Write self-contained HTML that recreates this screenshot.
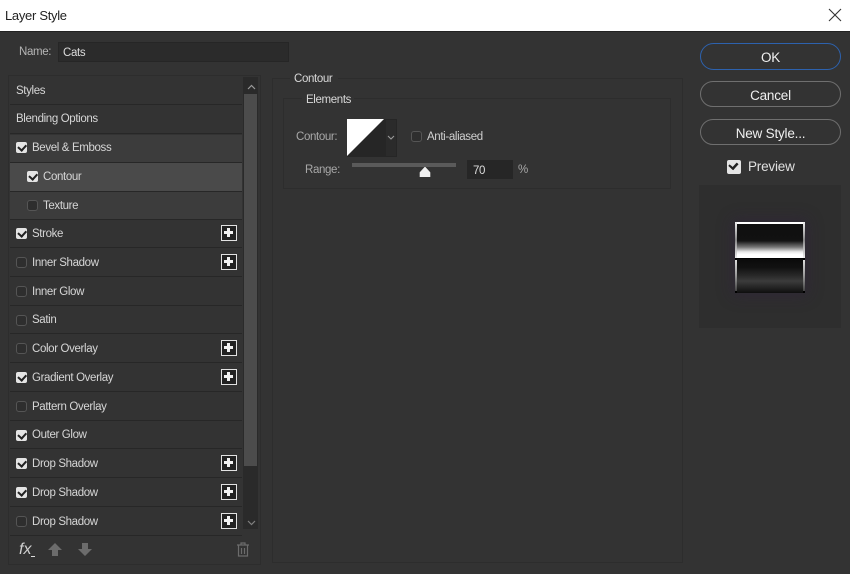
<!DOCTYPE html>
<html><head><meta charset="utf-8"><style>
html,body{margin:0;padding:0}
body{width:850px;height:574px;overflow:hidden;position:relative;background:#333;font-family:"Liberation Sans",sans-serif;font-size:11.5px;color:#d6d6d6}
div,span,svg{position:absolute;box-sizing:border-box}
.t{white-space:nowrap;line-height:16px;letter-spacing:-.36px}
.r{left:10px;width:232px;height:28px;background:#333;border-bottom:1px solid #272727}
.c{width:11px;height:11px;border-radius:3px;background:#2e2e2e;border:1px solid #555}
.k{width:11px;height:11px;border-radius:2px;background:#e4e4e4}
.k::after{content:"";position:absolute;left:2px;top:1.5px;width:6px;height:3.5px;border-left:2px solid #222;border-bottom:2px solid #222;transform:rotate(-48deg)}
.p{left:221px;width:16px;height:16px;border:1.5px solid #e2e2e2;background:#222}
.p::before{content:"";position:absolute;left:2px;top:5px;width:9px;height:3px;background:#f2f2f2}
.p::after{content:"";position:absolute;left:5px;top:2px;width:3px;height:9px;background:#f2f2f2}
.b{left:700px;width:141px;border:1px solid #6f6f6f;border-radius:14px;text-align:center;color:#f0f0f0;font-size:13.5px;letter-spacing:-.2px}
</style></head><body>

<div style="left:0;top:0;width:850px;height:31px;background:#fff"></div>
<div style="left:0;top:31px;width:850px;height:1px;background:#222"></div>
<div class="t" style="left:5px;top:8px;color:#222;font-size:13px;letter-spacing:-.3px">Layer Style</div>
<svg style="left:828px;top:8px" width="14" height="14" viewBox="0 0 14 14"><path d="M1 1L13 13M13 1L1 13" stroke="#333" stroke-width="1.1" fill="none"/></svg>

<div class="t" style="left:19px;top:44px;color:#b5b5b5">Name:</div>
<div style="left:58px;top:42px;width:231px;height:20px;background:#2b2b2b;border:1px solid #262626"></div>
<div class="t" style="left:63px;top:45px;color:#dcdcdc">Cats</div>

<div style="left:8px;top:75px;width:253px;height:490px;border:1px solid #2d2d2d"></div>
<div style="left:243px;top:77px;width:15px;height:452px;background:#2a2a2a"></div>
<div style="left:244px;top:94px;width:13px;height:372px;background:#4c4c4c"></div>
<svg style="left:247px;top:84px" width="9" height="6" viewBox="0 0 9 6"><path d="M1 5L4.5 1.5L8 5" stroke="#9a9a9a" stroke-width="1.2" fill="none"/></svg>
<svg style="left:247px;top:520px" width="9" height="6" viewBox="0 0 9 6"><path d="M1 1L4.5 4.5L8 1" stroke="#808080" stroke-width="1.2" fill="none"/></svg>

<div class="r" style="top:77px"></div>
<div class="r" style="top:106px"></div>
<div class="r" style="top:135px;background:#3c3c3c"></div>
<div class="r" style="top:163px;height:29px;background:#4a4a4a"></div>
<div class="r" style="top:192px;background:#3c3c3c"></div>
<div class="r" style="top:220px"></div>
<div class="r" style="top:249px"></div>
<div class="r" style="top:278px"></div>
<div class="r" style="top:306px"></div>
<div class="r" style="top:335px"></div>
<div class="r" style="top:364px"></div>
<div class="r" style="top:393px"></div>
<div class="r" style="top:421px"></div>
<div class="r" style="top:450px"></div>
<div class="r" style="top:479px"></div>
<div class="r" style="top:508px"></div>

<div class="t" style="left:16px;top:83px">Styles</div>
<div class="t" style="left:16px;top:111px">Blending Options</div>
<div class="k" style="left:16px;top:142px"></div><div class="t" style="left:32px;top:140px">Bevel &amp; Emboss</div>
<div class="k" style="left:27px;top:171px"></div><div class="t" style="left:43px;top:169px">Contour</div>
<div class="c" style="left:27px;top:200px"></div><div class="t" style="left:43px;top:198px">Texture</div>
<div class="k" style="left:16px;top:228px"></div><div class="t" style="left:32px;top:226px">Stroke</div><div class="p" style="top:225px"></div>
<div class="c" style="left:16px;top:257px"></div><div class="t" style="left:32px;top:255px">Inner Shadow</div><div class="p" style="top:254px"></div>
<div class="c" style="left:16px;top:286px"></div><div class="t" style="left:32px;top:284px">Inner Glow</div>
<div class="c" style="left:16px;top:315px"></div><div class="t" style="left:32px;top:312px">Satin</div>
<div class="c" style="left:16px;top:343px"></div><div class="t" style="left:32px;top:341px">Color Overlay</div><div class="p" style="top:340px"></div>
<div class="k" style="left:16px;top:372px"></div><div class="t" style="left:32px;top:370px">Gradient Overlay</div><div class="p" style="top:369px"></div>
<div class="c" style="left:16px;top:401px"></div><div class="t" style="left:32px;top:399px">Pattern Overlay</div>
<div class="k" style="left:16px;top:430px"></div><div class="t" style="left:32px;top:427px">Outer Glow</div>
<div class="k" style="left:16px;top:458px"></div><div class="t" style="left:32px;top:456px">Drop Shadow</div><div class="p" style="top:455px"></div>
<div class="k" style="left:16px;top:487px"></div><div class="t" style="left:32px;top:485px">Drop Shadow</div><div class="p" style="top:484px"></div>
<div class="c" style="left:16px;top:516px"></div><div class="t" style="left:32px;top:514px">Drop Shadow</div><div class="p" style="top:513px"></div>

<div class="t" style="left:19px;top:542px;font-style:italic;font-size:16px;letter-spacing:0;color:#d0d0d0">fx</div>
<div style="left:31px;top:556px;width:4px;height:1px;background:#ddd"></div>
<svg style="left:48px;top:543px" width="14" height="13" viewBox="0 0 14 13"><path d="M7 0L14 7H10V13H4V7H0Z" fill="#6c6c6c"/></svg>
<svg style="left:78px;top:543px" width="14" height="13" viewBox="0 0 14 13"><path d="M4 0H10V6H14L7 13L0 6H4Z" fill="#6c6c6c"/></svg>
<svg style="left:236px;top:542px" width="14" height="15" viewBox="0 0 14 15"><path d="M1 3H13M5 3V1H9V3M2.5 3.5V14H11.5V3.5M5.5 6V12M8.5 6V12" stroke="#6c6c6c" stroke-width="1.2" fill="none"/></svg>

<div style="left:272px;top:78px;width:411px;height:485px;border:1px solid #2d2d2d"></div>
<div style="left:290px;top:74px;width:48px;height:10px;background:#333"></div>
<div class="t" style="left:294px;top:71px;color:#d8d8d8">Contour</div>
<div style="left:283px;top:98px;width:388px;height:91px;border:1px solid #2d2d2d"></div>
<div style="left:302px;top:94px;width:52px;height:10px;background:#333"></div>
<div class="t" style="left:306px;top:92px;color:#d8d8d8">Elements</div>

<div class="t" style="left:296px;top:129px;color:#a8a8a8">Contour:</div>
<svg style="left:347px;top:119px" width="38" height="38" viewBox="0 0 38 38"><rect width="38" height="38" fill="#262626"/><path d="M0 0H37L0 37Z" fill="#fff"/></svg>
<div style="left:385px;top:119px;width:12px;height:38px;background:#2b2b2b;border:1px solid #262626"></div>
<svg style="left:387px;top:135px" width="8" height="5" viewBox="0 0 8 5"><path d="M1 1L4 4L7 1" stroke="#9a9a9a" stroke-width="1.1" fill="none"/></svg>
<div class="c" style="left:411px;top:131px"></div>
<div class="t" style="left:427px;top:129px;color:#cfcfcf">Anti-aliased</div>

<div class="t" style="left:305px;top:162px;color:#a8a8a8">Range:</div>
<div style="left:352px;top:163px;width:104px;height:4px;background:#5a5a5a"></div>
<svg style="left:419px;top:167px" width="12" height="10" viewBox="0 0 12 10"><path d="M6 0L11 5.5V10H1V5.5Z" fill="#f0f0f0" stroke="#f0f0f0" stroke-linejoin="round" stroke-width=".6"/></svg>
<div style="left:467px;top:160px;width:46px;height:19px;background:#262626"></div>
<div class="t" style="left:473px;top:163px;color:#dcdcdc">70</div>
<div class="t" style="left:518px;top:162px;color:#a8a8a8">%</div>

<div class="b" style="top:43px;height:27px;line-height:27px;border:1.5px solid #2d62ae">OK</div>
<div class="b" style="top:81px;height:26px;line-height:27px">Cancel</div>
<div class="b" style="top:119px;height:26px;line-height:27px">New Style...</div>
<div class="k" style="left:727px;top:160px;width:14px;height:14px"><span style="left:3px;top:2.5px;width:8px;height:5px;border-left:2px solid #222;border-bottom:2px solid #222;transform:rotate(-48deg)"></span></div>
<div class="t" style="left:748px;top:159px;font-size:13.5px;color:#e0e0e0;letter-spacing:-.2px">Preview</div>

<div style="left:699px;top:185px;width:142px;height:143px;background:#2e2e2e"></div>
<div style="left:735px;top:222px;width:70px;height:71px;background:#000;box-shadow:0 0 14px 3px rgba(50,30,70,.35)"></div>
<div style="left:737px;top:224px;width:66px;height:34px;background:linear-gradient(#0f0f0f 0,#111 45%,#161616 50%,#777 68%,#e8e8e8 82%,#fff 90%,#fff 100%)"></div>
<div style="left:737px;top:259px;width:66px;height:34px;background:linear-gradient(#0a0a0a 0,#111 25%,#2a2a2a 50%,#3c3c3c 65%,#222 85%,#0e0e0e 100%)"></div>
<div style="left:735px;top:222px;width:70px;height:2px;background:#fff"></div>
<div style="left:735px;top:222px;width:2px;height:36px;background:linear-gradient(#eee,#888 50%,#eee)"></div>
<div style="left:803px;top:222px;width:2px;height:36px;background:linear-gradient(#eee,#888 50%,#eee)"></div>
<div style="left:735px;top:260px;width:2px;height:31px;background:linear-gradient(#ddd,#999 50%,#444)"></div>
<div style="left:803px;top:260px;width:2px;height:31px;background:linear-gradient(#ddd,#999 50%,#444)"></div>
</body></html>
